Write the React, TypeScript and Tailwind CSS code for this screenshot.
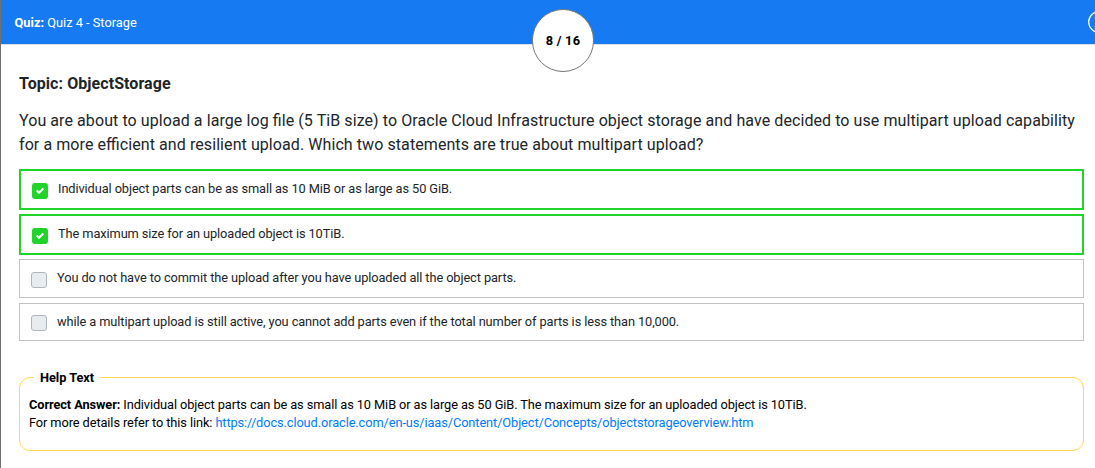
const options = [
  { text: 'Individual object parts can be as small as 10 MiB or as large as 50 GiB.', checked: true, box: 'h-[41px] mb-1 pt-3', label: '-mt-[3px]' },
  { text: 'The maximum size for an uploaded object is 10TiB.', checked: true, box: 'h-[41px] mb-1 pt-[11.5px]', label: '-mt-[2.5px]' },
  { text: 'You do not have to commit the upload after you have uploaded all the object parts.', checked: false, box: 'h-[39px] mb-[5px] pt-3', label: '-mt-[3px]' },
  {
    text: 'while a multipart upload is still active, you cannot add parts even if the total number of parts is less than 10,000.',
    checked: false,
    box: 'h-[38px] pt-[11px]',
    label: '-mt-[2px]',
  },
];

function Checkbox({ checked }: { checked: boolean }) {
  if (!checked) {
    return <span className="size-4 shrink-0 rounded-[3px] border border-[#adb5bd] bg-[#e9ecef]" />;
  }
  return (
    <span className="flex size-4 shrink-0 items-center justify-center rounded-[3px] bg-[#20d42a]">
      <svg viewBox="0 0 8 8" className="size-2" fill="#fff">
        <path d="M6.564.75l-3.59 3.612-1.538-1.55L0 4.26 2.974 7.25 8 2.193z" />
      </svg>
    </span>
  );
}

export default function App() {
  return (
    <div className="h-[468px] w-full overflow-hidden border-l border-[#6f7073] bg-white font-['Roboto',sans-serif] text-[#212529]">
      <header className="relative flex h-[45px] items-center justify-between overflow-visible border-b border-[#dee2e6] bg-[#167bf2] pl-[13.5px] text-[12.8px] leading-5 text-white">
        <div className="pt-0.5">
          <b>Quiz:</b> Quiz 4 - Storage
        </div>
        <div className="absolute left-[531px] top-[9px] flex h-[63px] w-[62px] items-center justify-center rounded-full border border-[#777] bg-white text-[12.8px] font-bold tracking-[0.25px] text-black">
          8 / 16
        </div>
        <svg viewBox="0 0 22 22" className="-mr-[15px] size-[22px]" fill="none" stroke="#fff">
          <circle cx="11" cy="11" r="10.3" strokeWidth="1.2" />
          <path d="M6.7 6.7l8.6 8.6M15.3 6.7l-8.6 8.6" strokeWidth="1" />
        </svg>
      </header>
      <main className="pl-[18px] pr-[11px]">
        <h1 className="mt-[27px] text-[16px] font-bold leading-6 tracking-[0.07px]">Topic: ObjectStorage</h1>
        <p className="mt-[13px] whitespace-nowrap text-[16px] leading-6 tracking-[0.079px] [font-feature-settings:'liga'_1]">
          You are about to upload a large log file (5 TiB size) to Oracle Cloud Infrastructure object storage and have decided to use multipart upload capability
          <br />
          for a more efficient and resilient upload. Which two statements are true about multipart upload?
        </p>
        <div className="mt-3">
          {options.map((o) => (
            <label
              key={o.text}
              className={`flex items-start gap-[10px] pl-[11px] ${o.checked ? 'border-2 border-[#20d42a]' : 'border border-[#c3c3c3]'} ${o.box}`}
            >
              <Checkbox checked={o.checked} />
              <span className={`whitespace-nowrap text-[12.8px] leading-[18px] tracking-[-0.096px] ${o.label}`}>{o.text}</span>
            </label>
          ))}
        </div>
        <fieldset className="mt-[26px] h-[84px] rounded-[11px] border border-[#ffd65c] pl-[9px] text-[12.8px] leading-[18px] tracking-[-0.096px] text-black">
          <legend className="ml-[5px] px-[6px] pt-0.5 font-bold tracking-[-0.04px]">Help Text</legend>
          <div className="mt-[9px] whitespace-nowrap">
            <b>Correct Answer:</b> Individual object parts can be as small as 10 MiB or as large as 50 GiB. The maximum size for an uploaded object is 10TiB.
          </div>
          <div className="whitespace-nowrap">
            For more details refer to this link:{' '}
            <a className="text-[#007bff]">https://docs.cloud.oracle.com/en-us/iaas/Content/Object/Concepts/objectstorageoverview.htm</a>
          </div>
        </fieldset>
      </main>
    </div>
  );
}
